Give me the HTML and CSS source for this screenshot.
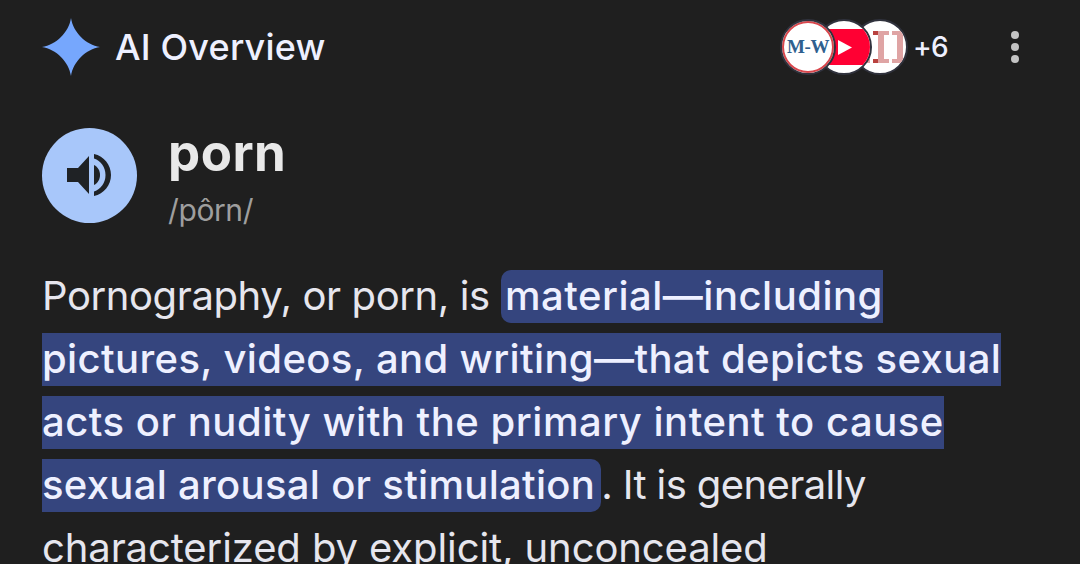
FILE: index.html
```
<!DOCTYPE html>
<html lang="en">
	<head>
		<meta charset="utf-8">
		<title>AI Overview</title>
		<meta name="viewport" content="width=device-width, initial-scale=1">
		<link rel="stylesheet" href="styles.css">
	</head>
	<body>
		<header class="header">
			<svg class="spark" viewBox="0 0 58 58">
				<path d="M29 0C31 14 44 27 58 29C44 31 31 44 29 58C27 44 14 31 0 29C14 27 27 14 29 0Z"/>
			</svg>
			<h1>AI Overview</h1>
			<div class="sources">
				<span class="source mw">M-W</span>
				<span class="source yt">
					<svg viewBox="0 0 52 52">
						<rect x="-4" y="8" width="57" height="36" rx="8" fill="#ff0033"/>
						<path d="M20 19L34 26.500L20 34Z" fill="#fff"/>
					</svg>
				</span>
				<span class="source ii">
					<svg viewBox="0 0 52 52">
						<path d="M19 10H35V14H30V38H35V42H19V38H24V14H19ZM38 10H54V14H49V38H54V42H38V38H43V14H38Z" fill="#dfa4a4"/>
						<path d="M19 10H24V14H19ZM19 38H24V42H19Z" fill="#b9423f"/>
						<path d="M13 38H16V42H13Z" fill="#dfa4a4"/>
					</svg>
				</span>
			</div>
			<span class="more">+6</span>
			<svg class="menu" viewBox="0 0 8 32">
				<circle cx="4" cy="4" r="4"/>
				<circle cx="4" cy="16" r="4"/>
				<circle cx="4" cy="28" r="4"/>
			</svg>
		</header>
		<section class="word">
			<button class="speak" aria-label="Listen">
				<svg viewBox="0 0 44 44">
					<path d="M0 15H11L22 3V41L11 29H0Z"/>
					<path d="M27 12C31 14 33 18 33 22C33 26 31 30 27 32Z"/>
					<path d="M27 1C37 3 44 12 44 22C44 32 37 41 27 43V38.500C34 36 38.500 30 38.500 22C38.500 14 34 8 27 5.500Z"/>
				</svg>
			</button>
			<div>
				<h2>porn</h2>
				<p class="phonetic">/pôrn/</p>
			</div>
		</section>
		<p class="text">
			<span class="lead">Pornography, or porn, is</span> <mark>material—including<br>
			<span class="line2">pictures, videos, and writing—that depicts sexual</span><br>
			<span class="line3">acts or nudity with the primary intent to cause</span><br>
			<span class="line4">sexual arousal or stimulation</span></mark><span class="tail">. It is generally</span><br>
			<span class="line5">characterized by explicit, unconcealed</span>
		</p>
	</body>
</html>
```
FILE: styles.css
```
html, body {
	margin: 0;
	padding: 0;
	height: 100%;
	overflow: hidden;
	background: #1f1f1f;
	color: #e6e6ee;
	font-family: Inter, sans-serif;
}
h1, h2, p {
	margin: 0;
}
.header {
	display: flex;
	align-items: center;
	height: 94px;
	padding: 0 61px 0 42px;
}
.spark {
	width: 58px;
	height: 58px;
	fill: #76a7fd;
}
h1 {
	flex: 1;
	margin-left: 15px;
	font-size: 36px;
	line-height: 40px;
	font-weight: 500;
	letter-spacing: 0.2px;
	color: #eef0ff;
}
.sources {
	display: flex;
}
.source {
	display: flex;
	align-items: center;
	justify-content: center;
	position: relative;
	box-sizing: border-box;
	width: 56px;
	height: 56px;
	margin-right: -20px;
	border: 2px solid #30323d;
	border-radius: 50%;
	overflow: hidden;
	background: #fff;
}
.source svg {
	width: 52px;
	height: 52px;
}
.source:last-child {
	margin-right: 0;
}
.mw {
	z-index: 3;
	box-shadow: inset 0 0 0 2px #d9464c;
	font: bold 19px "Liberation Serif", serif;
	letter-spacing: -0.3px;
	color: #2f608f;
}
.yt {
	z-index: 2;
}
.ii {
	z-index: 1;
}
.more {
	margin-left: 5px;
	font-size: 28px;
	line-height: 36px;
	letter-spacing: -0.7px;
	font-weight: 500;
	color: #eef0ff;
}
.menu {
	width: 8px;
	height: 32px;
	margin-left: 63px;
	fill: #c4c4c4;
}
.word {
	display: flex;
	height: 136px;
	padding: 34px 42px 0;
	box-sizing: border-box;
	gap: 31px;
}
.speak {
	display: flex;
	align-items: center;
	justify-content: center;
	box-sizing: border-box;
	width: 95px;
	height: 95px;
	padding: 0 2px 1px 0;
	border: none;
	border-radius: 50%;
	background: #a8c7fa;
}
.speak svg {
	width: 44px;
	height: 44px;
	fill: #1f2225;
}
h2 {
	font-size: 51px;
	line-height: 50px;
	font-weight: 700;
	letter-spacing: 0.5px;
	color: #e8e8e8;
}
.phonetic {
	margin-top: 13px;
	font-size: 30px;
	line-height: 38px;
	letter-spacing: -0.4px;
	color: #9e9e9e;
}
.text {
	padding: 34px 0 0 42px;
	font-size: 40px;
	line-height: 63px;
	white-space: nowrap;
}
.lead {
	letter-spacing: -0.4px;
}
mark {
	padding: 1px 6px 3px 4px;
	border-radius: 10px;
	background: #35457e;
	color: #eef0ff;
	font-weight: 500;
	letter-spacing: 0.5px;
}
.line2 {
	letter-spacing: 0.38px;
}
.line3 {
	letter-spacing: 0.52px;
}
.line4 {
	letter-spacing: 0.3px;
}
.tail {
	letter-spacing: -0.6px;
}
.line5 {
	letter-spacing: -0.1px;
}
```
